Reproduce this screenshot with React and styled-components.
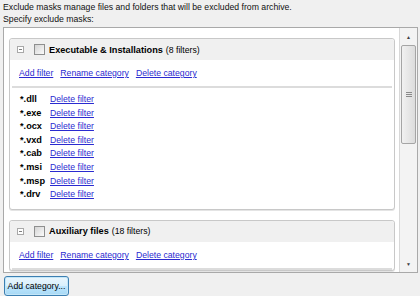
import React from 'react'
import styled, { createGlobalStyle } from 'styled-components'

const FONT = '"Liberation Sans", Arial, sans-serif';

const GlobalStyle = createGlobalStyle`
  body {
    margin: 0;
    background: #f0f0f0;
    font-family: ${FONT};
    font-size: 8.7px;
    color: #000;
  }
`;

const Page = styled.div`
  width: 420px;
  height: 296px;
  padding: 1px 2px 0 3px;
  box-sizing: border-box;
  display: flex;
  flex-direction: column;
`;

const Intro = styled.div`
  line-height: 12px;
  color: #111;
`;

const ListBox = styled.div`
  margin-top: 2px;
  height: 244px;
  border: 1px solid #a9a9a9;
  background: #fff;
  display: flex;
  overflow: hidden;
`;

const Content = styled.div`
  flex: 1;
  padding: 10px 4px 0 5px;
  overflow: hidden;
`;

const Card = styled.div`
  border: 1px solid #c8c8c8;
  border-radius: 3px;
  background: #fff;
  margin-bottom: 10px;
  box-shadow: 0 1px 0 #e4e4e4;
`;

const CardHeader = styled.div`
  height: 21px;
  background: #f0f0f0;
  display: flex;
  align-items: center;
  padding-left: 7px;
  border-radius: 3px 3px 0 0;
`;

const Toggle = styled.span`
  width: 5px;
  height: 5px;
  border: 1px solid #a8a8a8;
  background: #fff;
  position: relative;
  margin-right: 10px;
  &::after {
    content: '';
    position: absolute;
    left: 1px;
    top: 2px;
    width: 3px;
    height: 1px;
    background: #808080;
  }
`;

const Check = styled.span`
  width: 9px;
  height: 9px;
  border: 1px solid #8e8f8f;
  background: linear-gradient(135deg, #d4d4d4, #fbfbfb);
  margin-right: 4px;
`;

const Title = styled.span`
  font-weight: bold;
  font-size: 9.2px;
`;

const Count = styled.span`
  margin-left: 3px;
`;

const LinkRow = styled.div`
  display: flex;
  gap: 7px;
  padding: 8px 0 0 9px;
  height: 18px;
`;

const Link = styled.a`
  color: #2a2ad0;
  text-decoration: underline;
  cursor: pointer;
`;

const Separator = styled.div`
  height: 2px;
  background: #dcdcdc;
  margin: 0 2px;
`;

const Filters = styled.div`
  padding: 5px 0 7px 10px;
`;

const FilterRow = styled.div`
  display: flex;
  height: 13.6px;
  line-height: 13px;
`;

const Mask = styled.span`
  width: 30px;
  font-weight: bold;
  font-size: 9.2px;
`;

const Scrollbar = styled.div`
  width: 17px;
  border-left: 1px solid #d8d8d8;
  background: #f3f3f3;
  display: flex;
  flex-direction: column;
  align-items: center;
`;

const Arrow = styled.div`
  height: 17px;
  width: 100%;
  display: flex;
  align-items: center;
  justify-content: center;
  font-size: 5px;
  color: #404040;
`;

const Thumb = styled.div`
  width: 13px;
  height: 97px;
  border: 1px solid #a5a5a5;
  border-radius: 2px;
  background: linear-gradient(90deg, #f1f1f1, #dcdcdc);
  display: flex;
  align-items: center;
  justify-content: center;
`;

const Grip = styled.div`
  width: 6px;
  height: 6px;
  background: repeating-linear-gradient(180deg, #8a8a8a 0 1px, transparent 1px 2px);
`;

const Spacer = styled.div`
  flex: 1;
`;

const Button = styled.button`
  margin-top: 3px;
  margin-left: 1px;
  align-self: flex-start;
  width: 65px;
  height: 20px;
  padding: 0;
  white-space: nowrap;
  font-family: ${FONT};
  font-size: 8.7px;
  color: #000;
  border: 1px solid #3c7fb1;
  border-radius: 3px;
  background: linear-gradient(180deg, #eaf6fd 0%, #d9f0fc 50%, #bee6fd 51%, #a7d9f5 100%);
  box-shadow: inset 0 0 0 1px #c3e6f8;
`;

const categories = [
  {
    name: 'Executable & Installations',
    count: 8,
    masks: ['dll', 'exe', 'ocx', 'vxd', 'cab', 'msi', 'msp', 'drv'],
  },
  { name: 'Auxiliary files', count: 18, masks: [] },
];

const Category = ({ cat }) => (
  <Card>
    <CardHeader>
      <Toggle />
      <Check />
      <Title>{cat.name}</Title>
      <Count>({cat.count} filters)</Count>
    </CardHeader>
    <LinkRow>
      <Link>Add filter</Link>
      <Link>Rename category</Link>
      <Link>Delete category</Link>
    </LinkRow>
    <Separator />
    {cat.masks.length > 0 && (
      <Filters>
        {cat.masks.map((m) => (
          <FilterRow key={m}>
            <Mask>*.{m}</Mask>
            <Link>Delete filter</Link>
          </FilterRow>
        ))}
      </Filters>
    )}
  </Card>
);

const App = () => {
  return (
    <Page>
      <GlobalStyle />
      <Intro>
        Exclude masks manage files and folders that will be excluded from archive.
        <br />
        Specify exclude masks:
      </Intro>
      <ListBox>
        <Content>
          {categories.map((c) => (
            <Category key={c.name} cat={c} />
          ))}
        </Content>
        <Scrollbar>
          <Arrow>▲</Arrow>
          <Thumb>
            <Grip />
          </Thumb>
          <Spacer />
          <Arrow>▼</Arrow>
        </Scrollbar>
      </ListBox>
      <Button>Add category...</Button>
    </Page>
  )
}

export default App
